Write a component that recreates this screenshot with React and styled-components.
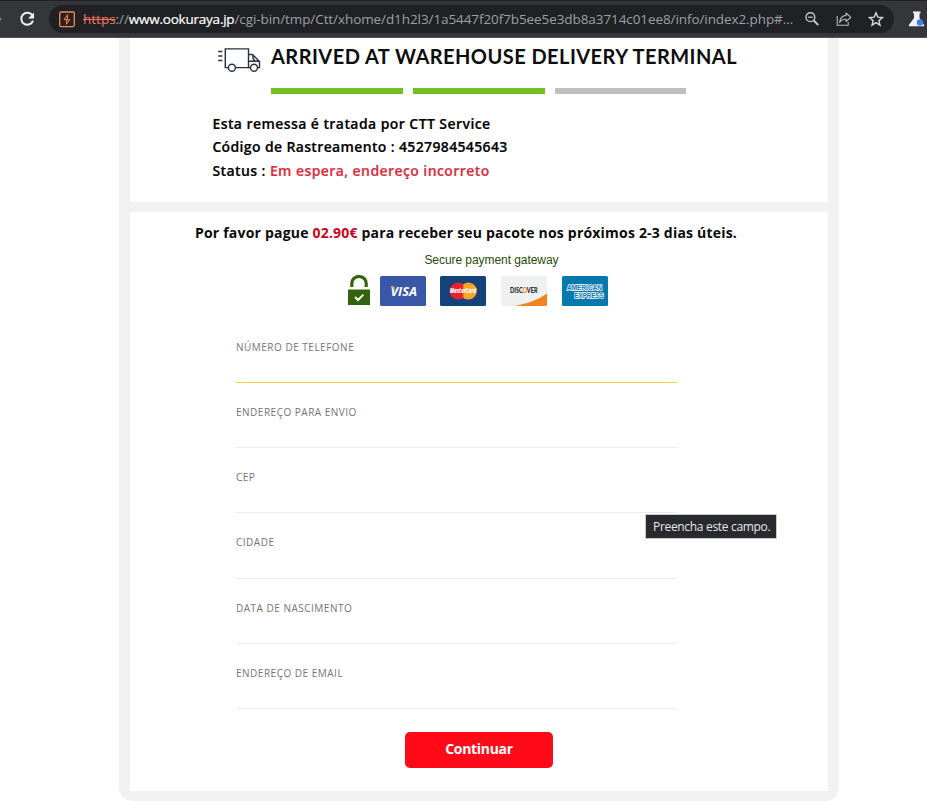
import React from "react";
import styled, { createGlobalStyle } from "styled-components";

const GlobalStyle = createGlobalStyle`
  * { box-sizing: border-box; }
  html, body { margin: 0; padding: 0; background: #fff; overflow: hidden; }
  body { font-family: "Open Sans", "Noto Sans", sans-serif; }
  svg { overflow: visible; }
`;

const Page = styled.div`
  width: 927px;
  height: 812px;
  overflow: hidden;
  background: #fff;
`;

const Toolbar = styled.header`
  display: flex;
  align-items: center;
  height: 38px;
  background: #35363a;
  border-top: 1px solid #202124;
  border-bottom: 1px solid #505155;
`;

const NavIcons = styled.div`
  display: flex;
  align-items: center;
  width: 49px;
  flex: none;
`;

const AddressBar = styled.div`
  display: flex;
  align-items: center;
  width: 845px;
  height: 28px;
  padding: 0 9px 0 10px;
  border-radius: 14px;
  background: #202124;
`;

const Url = styled.div`
  width: 712px;
  margin-left: 7px;
  font: 400 13.5px/20px "Open Sans", sans-serif;
  letter-spacing: ${(p) => p.$spacing};
  white-space: nowrap;
  color: #9aa0a6;
`;

const UrlScheme = styled.span`
  color: #f0775c;
  letter-spacing: 0;
  text-decoration: line-through;
`;

const UrlHost = styled.span`
  color: #fff;
  letter-spacing: ${(p) => p.$spacing};
  -webkit-text-stroke: 0.2px #fff;
`;

const Actions = styled.div`
  display: flex;
  align-items: center;
  gap: 16px;
  margin-left: 9px;
`;

const Extension = styled.div`
  display: flex;
  margin-left: 13px;
  width: 20px;
  overflow: hidden;
`;

const Frame = styled.main`
  display: flex;
  flex-direction: column;
  gap: 10px;
  width: 720px;
  height: 763px;
  margin-left: 119px;
  padding: 0 11px 10px;
  border-radius: 0 0 14px 14px;
  background: #f1f1f1;
`;

const StatusCard = styled.section`
  height: 164px;
  background: #fff;
`;

const Heading = styled.div`
  display: flex;
  align-items: flex-start;
  height: 50px;
  padding: 8px 0 0 87px;
`;

const Title = styled.h1`
  margin: -3px 0 0 9px;
  font: 700 20px/26px Lato, sans-serif;
  letter-spacing: ${(p) => p.$spacing};
  white-space: nowrap;
  color: #0d0d0d;
`;

const Steps = styled.div`
  display: flex;
  gap: 10px;
  width: 415.4px;
  margin-left: 141px;
`;

const Step = styled.div`
  flex: 1;
  height: 6px;
  background: ${(p) => (p.$done ? "#75bf20" : "#bfbfbf")};
`;

const Details = styled.div`
  margin: 17.7px 0 0 82.4px;
`;

const Line = styled.p`
  margin: 0;
  font-size: 14px;
  font-weight: 600;
  line-height: 23.5px;
  letter-spacing: ${(p) => p.$spacing};
  white-space: nowrap;
  color: #000;
  -webkit-text-stroke: 0.2px currentColor;
`;

const Warning = styled.span`
  color: #d92f3b;
`;

const PaymentCard = styled.section`
  display: flex;
  flex-direction: column;
  height: 579px;
  background: #fff;
`;

const Notice = styled.p`
  margin: 9px 0 0 65px;
  font-size: 14px;
  font-weight: 700;
  line-height: 23px;
  letter-spacing: ${(p) => p.$spacing};
  white-space: nowrap;
  color: #0a0a0a;
`;

const Price = styled.span`
  color: #d0021b;
`;

const Gateway = styled.div`
  margin: 9px 0 0 294.4px;
  font: 400 12px/15px "Liberation Sans", Arial, sans-serif;
  letter-spacing: -0.06px;
  color: #234d05;
`;

const Cards = styled.div`
  display: flex;
  align-items: flex-end;
  height: 38px;
  padding-left: 217px;
`;

const CardSlot = styled.div`
  display: flex;
  margin-left: ${(p) => p.$gap}px;
`;

const Form = styled.div`
  width: 441px;
  margin: 11.8px 0 0 106px;
`;

const Field = styled.div`
  height: 65.2px;
  padding-top: 21px;
  border-bottom: 1px solid ${(p) => (p.$active ? "#f5cf45" : "#ededed")};
`;

const Label = styled.div`
  font-size: 10px;
  line-height: 16px;
  letter-spacing: ${(p) => p.$spacing};
  white-space: nowrap;
  color: #747474;
`;

const Button = styled.button`
  width: 148px;
  height: 36px;
  margin: 23px 0 0 275px;
  padding: 0 0 2px;
  border: 0;
  border-radius: 5px;
  background: #ff0a18;
  color: #fff;
  font: 700 14px/20px "Open Sans", sans-serif;
  letter-spacing: ${(p) => p.$spacing};
`;

const Tooltip = styled.div`
  position: absolute;
  left: 645px;
  top: 514px;
  width: 132px;
  height: 25px;
  padding-left: 7px;
  border: 1px solid #cbcbcb;
  background: #292a2d;
  color: #e8e8e8;
  font: 400 12px/23px "Open Sans", sans-serif;
  letter-spacing: ${(p) => p.$spacing};
  white-space: nowrap;
`;

const NavGlyphs = () => (
  <svg width="49" height="28" viewBox="0 0 49 28">
    <path d="M0 12l2 2-2 2z" fill="#77787b" />
    <path d="M32.2 10.2A6 6 0 1 0 33 15.6" fill="none" stroke="#f1f1f1" strokeWidth="2" />
    <path d="M34 7.4v6h-6z" fill="#f1f1f1" />
  </svg>
);

const SiteIcon = () => (
  <svg width="17" height="17" viewBox="0 0 17 17">
    <rect x="0.700" y="1" width="14.6" height="14.6" rx="1.5" fill="#2a211e" stroke="#f58a5c" strokeWidth="1.3" />
    <path d="M8.700 3.600 5 8.700h5.800L7.200 13.400M8.500 4.200v4.300M7.500 9v4" fill="none" stroke="#f58a5c" strokeWidth="1" />
  </svg>
);

const ZoomOut = () => (
  <svg width="16" height="16" viewBox="0 0 16 16" fill="none" stroke="#c8cacd">
    <circle cx="6.4" cy="6.2" r="4.4" strokeWidth="1.4" />
    <path d="M4 6.2h4.8" strokeWidth="1.2" />
    <path d="M9.7 9.5 14.2 14" strokeWidth="1.8" />
  </svg>
);

const Share = () => (
  <svg width="16" height="16" viewBox="0 0 16 16" fill="none" stroke="#b8babd" strokeWidth="1.1">
    <path d="M1.2 5v9.2h11V11" />
    <path d="M10 2l4.8 4.3L10 10.500V8.200C7 8 5 9 3.600 11.500 4 7.500 6 4.800 10 4.400z" strokeLinejoin="round" />
  </svg>
);

const Star = () => (
  <svg width="16" height="16" viewBox="0 0 16 16">
    <path
      d="M8 1.800l1.800 4.300 4.700.4-3.600 3.100 1.100 4.600L8 11.700l-4 2.500 1.100-4.600L1.500 6.500l4.700-.4z"
      fill="none"
      stroke="#d6d7d9"
      strokeWidth="1.4"
    />
  </svg>
);

const Flask = () => (
  <svg width="20" height="18" viewBox="0 0 20 18">
    <path d="M6 1.500h7.500v1.700h-1V8l4.500 7c.4.700 0 1.300-.7 1.300H2.600c-.8 0-1.100-.7-.7-1.300L7 8V3.200H6z" fill="#f3f3f3" />
    <circle cx="13" cy="12.500" r="3.200" fill="#3b82f6" />
  </svg>
);

const Truck = () => (
  <svg width="45" height="28" viewBox="0 0 45 28" fill="none" stroke="#27313c" strokeWidth="1.400">
    <path d="M1.200 5.500h4.200M1.200 10h4.200M1.200 14.500h4.200" />
    <path d="M11.500 21.600H8.300V2.900h23.200v18.700H18.500" />
    <path d="M31.500 8.500h4l7 7v6.100h-1.700M33.800 21.600h-2.300M32 15.300h10.500M36 9v3.500l2 2.500" />
    <circle cx="14.900" cy="21.800" r="3.500" />
    <circle cx="37" cy="21.800" r="3.500" />
  </svg>
);

const Lock = () => (
  <svg width="24" height="32" viewBox="0 0 24 32">
    <path d="M4.800 13V9.500a7.200 7.200 0 0 1 14.400 0V13" fill="none" stroke="#35620f" strokeWidth="3.200" />
    <rect x="1" y="15.500" width="22" height="15.500" fill="#35620f" />
    <path d="M8 23l3 3 5.400-5.400" fill="none" stroke="#fff" strokeWidth="2" />
  </svg>
);

const Visa = () => (
  <svg width="46" height="30" viewBox="0 0 46 30">
    <rect width="46" height="30" rx="1.500" fill="#3957a7" />
    <text x="10.500" y="19.500" fill="#fff" fontFamily="Open Sans" fontWeight="700" fontStyle="italic" fontSize="12.500" textLength="26.500" lengthAdjust="spacingAndGlyphs">VISA</text>
    <path d="M10.200 10.300h3.800l1.300 5z" fill="#f4b24a" />
  </svg>
);

const Mastercard = () => (
  <svg width="46" height="30" viewBox="0 0 46 30">
    <rect width="46" height="30" rx="1.500" fill="#16427c" />
    <circle cx="18.200" cy="15" r="8.600" fill="#e9212e" />
    <circle cx="28.300" cy="15" r="8.600" fill="#f9a62b" />
    <path d="M23.250 8a8.600 8.600 0 0 0 0 14z" fill="#e9212e" />
    <text x="10" y="17.200" fill="#fff" fontFamily="Open Sans" fontWeight="800" fontStyle="italic" fontSize="6" textLength="26" lengthAdjust="spacingAndGlyphs">MasterCard</text>
  </svg>
);

const Discover = () => (
  <svg width="46" height="30" viewBox="0 0 46 30">
    <rect width="46" height="30" rx="1.500" fill="#eff1f1" />
    <path d="M13 30C25 28 37 24 46 17.500V28.500q0 1.500-1.500 1.500z" fill="#f58220" />
    <text x="9" y="17.400" fill="#222" fontFamily="Lato" fontWeight="900" fontSize="6.800" textLength="27.500" lengthAdjust="spacingAndGlyphs">
      DISC<tspan fill="#f58220">O</tspan>VER
    </text>
  </svg>
);

const Amex = () => (
  <svg width="46" height="30" viewBox="0 0 46 30" fontFamily="Liberation Sans" fontWeight="700" fontSize="7.500">
    <rect width="46" height="30" rx="1.500" fill="#0578ae" />
    <g fill="#0578ae" stroke="#fff" strokeWidth="1.500" paintOrder="stroke">
      <text x="5" y="13.800" textLength="35" lengthAdjust="spacingAndGlyphs">AMERICAN</text>
      <text x="12.500" y="21.500" textLength="29" lengthAdjust="spacingAndGlyphs">EXPRESS</text>
    </g>
  </svg>
);

const FIELDS = [
  "NÚMERO DE TELEFONE",
  "ENDEREÇO PARA ENVIO",
  "CEP",
  "CIDADE",
  "DATA DE NASCIMENTO",
  "ENDEREÇO DE EMAIL",
];

export default function App() {
  return (
    <Page>
      <GlobalStyle />
      <Toolbar>
        <NavIcons><NavGlyphs /></NavIcons>
        <AddressBar>
          <SiteIcon />
          <Url $spacing="-0.085px">
            <UrlScheme>https</UrlScheme>://<UrlHost $spacing="-0.23px">www.ookuraya.jp</UrlHost>
            /cgi-bin/tmp/Ctt/xhome/d1h2l3/1a5447f20f7b5ee5e3db8a3714c01ee8/info/index2.php#...
          </Url>
          <Actions><ZoomOut /><Share /><Star /></Actions>
        </AddressBar>
        <Extension><Flask /></Extension>
      </Toolbar>
      <Frame>
        <StatusCard>
          <Heading>
            <Truck />
            <Title $spacing="0.45px">ARRIVED AT WAREHOUSE DELIVERY TERMINAL</Title>
          </Heading>
          <Steps><Step $done /><Step $done /><Step /></Steps>
          <Details>
            <Line $spacing="0.43px">Esta remessa é tratada por CTT Service</Line>
            <Line $spacing="0.36px">Código de Rastreamento : 4527984545643</Line>
            <Line $spacing="0.42px">Status : <Warning>Em espera, endereço incorreto</Warning></Line>
          </Details>
        </StatusCard>
        <PaymentCard>
          <Notice $spacing="0.2px">
            Por favor pague <Price>02.90€</Price> para receber seu pacote nos próximos 2-3 dias úteis.
          </Notice>
          <Gateway>Secure payment gateway</Gateway>
          <Cards>
            <Lock />
            <CardSlot $gap={9}><Visa /></CardSlot>
            <CardSlot $gap={13.5}><Mastercard /></CardSlot>
            <CardSlot $gap={15.5}><Discover /></CardSlot>
            <CardSlot $gap={14.5}><Amex /></CardSlot>
          </Cards>
          <Form>
            {FIELDS.map((name, i) => (
              <Field key={name} $active={i === 0}>
                <Label $spacing="0.5px">{name}</Label>
              </Field>
            ))}
          </Form>
          <Button type="button" $spacing="-0.3px">Continuar</Button>
        </PaymentCard>
      </Frame>
      <Tooltip $spacing="-0.32px">Preencha este campo.</Tooltip>
    </Page>
  );
}
